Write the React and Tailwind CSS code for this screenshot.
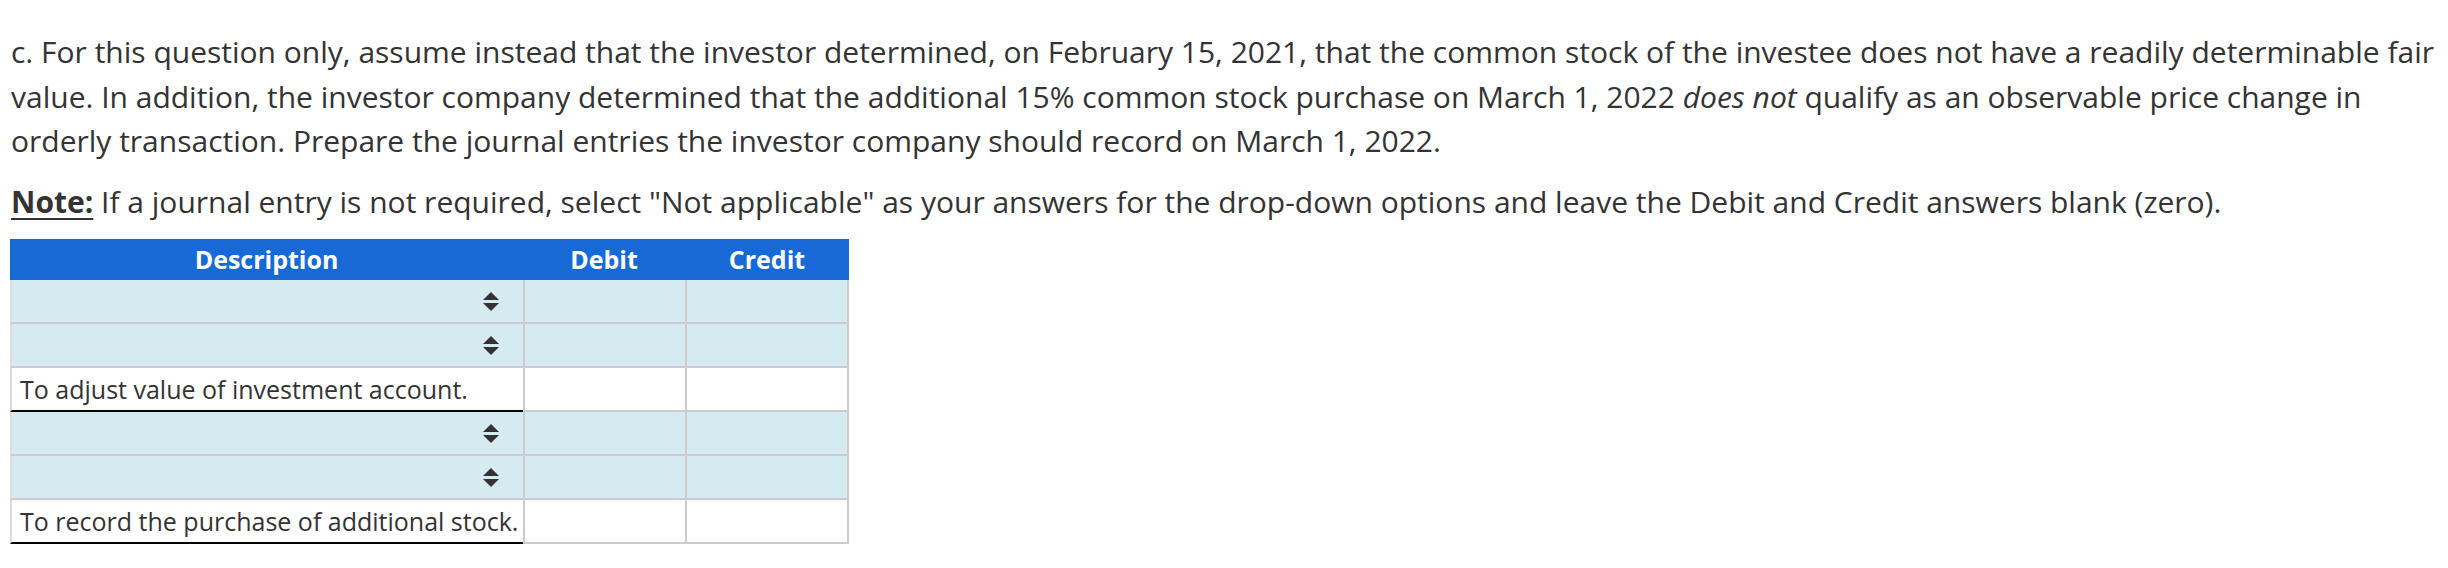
import React from "react";

const rows = [
  { kind: "select" },
  { kind: "select" },
  { kind: "memo", text: "To adjust value of investment account." },
  { kind: "select" },
  { kind: "select" },
  { kind: "memo", text: "To record the purchase of additional stock." },
];

function SortArrows() {
  return (
    <svg width="16" height="19" viewBox="0 0 16 19" className="text-[#333]">
      <path d="M8 0 L16 8 L0 8 Z" fill="currentColor" />
      <path d="M0 11 L16 11 L8 19 Z" fill="currentColor" />
    </svg>
  );
}

function JournalRow({ row }) {
  const isMemo = row.kind === "memo";
  const bg = isMemo ? "bg-white" : "bg-[#d5eaf1]";

  return (
    <div className="flex h-[44px]">
      <div
        className={`w-[513px] border-l-2 border-l-[#dcdcdc] border-b-2 flex items-center ${bg} ${
          isMemo ? "border-b-black pl-[8px]" : "border-b-[#cccccc] justify-end pr-[24px]"
        }`}>
        {isMemo ? (
          <span className="text-[25px] text-[#333] pt-[1px] whitespace-nowrap">{row.text}</span>
        ) : (
          <SortArrows />
        )}
      </div>
      <div className={`w-[162px] border-l-2 border-b-2 border-[#cccccc] ${bg}`}></div>
      <div className={`w-[164px] border-l-2 border-r-2 border-b-2 border-[#cccccc] ${bg}`}></div>
    </div>
  );
}

export default function App() {
  return (
    <div className="bg-white min-h-[568px] font-['Open_Sans',sans-serif] text-[#333]">
      <div className="pl-[11px] pt-[30px]">
        <p className="text-[30px] leading-[44.5px]">
          c. For this question only, assume instead that the investor determined, on February 15, 2021, that the
          common stock of the investee does not have a readily determinable fair value. In addition, the investor
          company determined that the additional 15% common stock purchase on March 1, 2022 <em>does not</em> qualify
          as an observable price change in orderly transaction. Prepare the journal entries the investor company
          should record on March 1, 2022.
        </p>
        <p className="text-[30px] leading-[44.5px] mt-[16px]">
          <strong className="underline underline-offset-[5px] decoration-2">Note:</strong> If a journal entry is not
          required, select "Not applicable" as your answers for the drop-down options and leave the Debit and Credit
          answers blank (zero).
        </p>
      </div>

      {/* journal table */}
      <div className="ml-[10px] mt-[15px] w-[839px]">
        <div className="flex h-[41px] bg-[#176ad6] text-white font-bold text-[25px]">
          <div className="w-[513px] flex items-center justify-center">Description</div>
          <div className="w-[162px] flex items-center justify-center">Debit</div>
          <div className="w-[164px] flex items-center justify-center">Credit</div>
        </div>
        {rows.map((row, i) => (
          <JournalRow key={i} row={row} />
        ))}
      </div>
    </div>
  );
}
